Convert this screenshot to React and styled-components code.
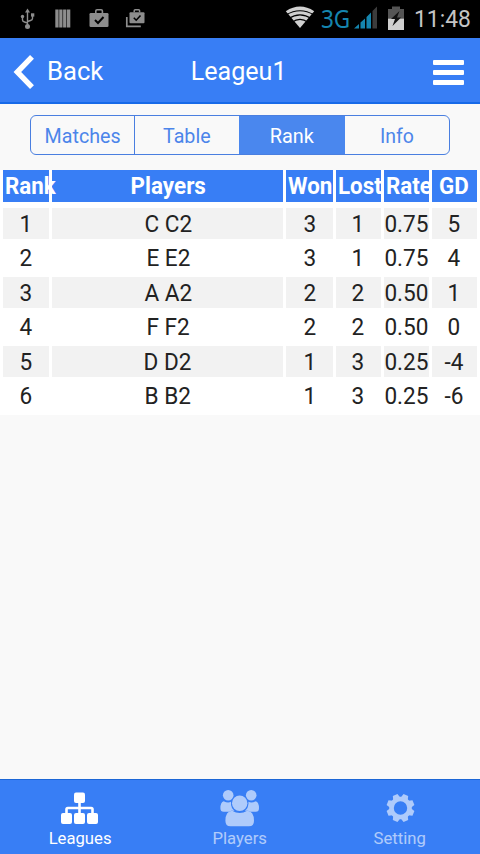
import React from "react";
import styled, { createGlobalStyle } from "styled-components";

const Global = createGlobalStyle`
  * { box-sizing: border-box; }
  body { margin: 0; background: #f9f9f9; font-family: Roboto, "Noto Sans", sans-serif; }
`;

const Screen = styled.div`
  width: 480px;
  height: 854px;
  display: flex;
  flex-direction: column;
  background: #f9f9f9;
  overflow: hidden;
`;

const Label = styled.span`
  display: inline-block;
  white-space: nowrap;
  flex: none;
  transform: scaleX(${(p) => p.$sx || 1});
  transform-origin: ${(p) => p.$origin || "center"};
`;

const StatusBar = styled.div`
  height: 38px;
  flex: none;
  background: #000;
  display: flex;
  justify-content: space-between;
`;

const Network = styled.span`
  font-family: "Noto Sans", sans-serif;
  font-size: 25px;
  line-height: 36px;
  color: #1585ae;
  margin-left: 6px;
  width: 33px;
`;

const Clock = styled.span`
  font-size: 24px;
  line-height: 39px;
  color: #c4c4c4;
  margin-left: 10px;
  width: 57px;
`;

const StatusRight = styled.div`
  display: flex;
  width: 195px;
`;

const Header = styled.header`
  height: 66px;
  flex: none;
  background: #387ef5;
  border-bottom: 2px solid #176ae8;
  color: #fff;
  font-size: 26px;
  line-height: 66px;
  display: grid;
  grid-template-columns: 160px 1fr 160px;
`;

const BackButton = styled.div`
  display: flex;
  padding-left: 13px;
  gap: 12px;
`;

const Title = styled.div`
  display: flex;
  justify-content: center;
  padding-right: 3px;
`;

const MenuButton = styled.div`
  display: flex;
  flex-direction: column;
  gap: 5px;
  align-items: flex-end;
  padding: 22px 16px 0 0;
`;

const MenuLine = styled.i`
  width: 31px;
  height: 5px;
  border-radius: 1px;
  background: #fff;
`;

const Tabs = styled.div`
  height: 40px;
  flex: none;
  margin: 11px 30px 15px;
  border: 1px solid #4a7fe0;
  border-radius: 6px;
  display: grid;
  grid-template-columns: 104px 104.4px 105.4px 1fr;
  overflow: hidden;
`;

const Tab = styled.div`
  display: flex;
  justify-content: center;
  font-size: 20.5px;
  line-height: 40px;
  color: ${(p) => (p.$active ? "#fff" : "#4c85ea")};
  background: ${(p) => (p.$active ? "#4a87ee" : "transparent")};
  border-right: ${(p) => (p.$divider ? "1px solid #4a7fe0" : "0")};
`;

const Table = styled.div`
  flex: none;
  background: #fff;
  padding: 0 3px;
  height: 244.5px;
`;

const Row = styled.div`
  display: grid;
  grid-template-columns: 46.4px 231px 46.3px 45px 45px 45px;
  grid-template-rows: 31.5px;
  column-gap: 3px;
  height: 31.5px;
  margin-bottom: ${(p) => (p.$head ? "6px" : "3px")};
`;

const Cell = styled.div`
  display: flex;
  justify-content: center;
  background: ${(p) => (p.$shade ? "#f2f2f2" : "transparent")};
  color: #222;
  font-size: 24px;
  line-height: 33px;
  min-width: 0;
`;

const HeadCell = styled(Cell)`
  background: #387ef5;
  color: #fff;
  font-weight: 700;
  line-height: 32px;
  justify-content: ${(p) => (p.$start ? "flex-start" : "center")};
  padding-left: ${(p) => (p.$start ? "2px" : "0")};
`;

const Spacer = styled.div`
  flex: 1;
`;

const BottomBar = styled.nav`
  height: 75px;
  flex: none;
  background: #387ef5;
  border-top: 1.5px solid #1b66d6;
  display: grid;
  grid-template-columns: repeat(3, 160px);
`;

const NavItem = styled.div`
  color: #fff;
  opacity: ${(p) => (p.$active ? 1 : 0.6)};
  display: flex;
  flex-direction: column;
  align-items: center;
  padding-top: 8px;
  font-size: 17px;
  line-height: 21px;
`;

const StatusIcons = () => (
  <svg width="160" height="38" viewBox="0 0 160 38" fill="#8d8d8d">
    <g stroke="#8d8d8d" strokeWidth="1.4" fill="none">
      <path d="M27.5 12v14M22.5 17v3q0 1.5 2 2l3 1M32.5 16v2.5q0 1.500-2 2l-3 1" />
    </g>
    <path d="M27.500 8.500l2.500 4h-5z" />
    <circle cx="27.500" cy="26.500" r="2.500" />
    <circle cx="22.500" cy="16.500" r="1.700" />
    <path d="M31 13.300h3.300v3.300H31z" />
    <path d="M55.300 9.500h3.300v18h-3.300zM59.200 9.500h3.300v18h-3.300zM63.100 9.500h3.300v18h-3.300zM67 9.500h3.300v18H67z" />
    <rect x="89.500" y="13" width="19" height="14" rx="1.300" />
    <path d="M95.800 13v-2q0-1.300 1.300-1.300h4q1.300 0 1.300 1.300v2" fill="none" stroke="#8d8d8d" strokeWidth="1.600" />
    <path d="M95 20l3 3 5.500-6" fill="none" stroke="#000" strokeWidth="2" />
    <rect x="129.500" y="12.300" width="15" height="11" rx="1" />
    <path d="M134.200 12.300v-1.500q0-1 1-1h3.400q1 0 1 1v1.500" fill="none" stroke="#8d8d8d" strokeWidth="1.500" />
    <path d="M133.800 17.800l2.400 2.400 4.300-4.700" fill="none" stroke="#000" strokeWidth="1.600" />
    <path d="M126.800 17v9.300h14" fill="none" stroke="#8d8d8d" strokeWidth="1.700" />
  </svg>
);

const WifiIcon = () => (
  <svg width="30" height="38" viewBox="285 0 30 38">
    <path d="M300 28L285.800 11.200Q300 2 314.200 11.200z" fill="#d0d0d0" />
    <g fill="none" stroke="#000" strokeWidth="1.200">
      <path d="M286 15q14-8.500 28 0" />
      <path d="M288.500 18.600q11.500-7.500 23 0" />
      <path d="M292 22.200q8-5.500 16 0" />
    </g>
  </svg>
);

const SignalIcon = () => (
  <svg width="24" height="38" viewBox="0 0 24 38" fill="#1585ae">
    <path d="M0 28.500l5-4.500v4.500zM6.500 22.500l4.500-4v10H6.500zM12.500 17l4.500-4.500v16h-4.500z" />
    <path d="M18.500 11L23 6.500v22h-4.500z" fill="#3c3c3c" />
  </svg>
);

const BatteryIcon = () => (
  <svg width="16" height="38" viewBox="0 0 16 38">
    <path d="M4 6.500h8V9h4v9.500H0V9h4z" fill="#555" />
    <path d="M0 18.500h16V30H0z" fill="#cfcfcf" />
    <path d="M11.500 11L3 19h4l-2.500 7L13 17.500H9z" fill="#111" />
  </svg>
);

const BackIcon = () => (
  <svg width="22" height="66" viewBox="0 0 22 66">
    <path d="M19 18.800L4.300 34 19 49.200" fill="none" stroke="#fff" strokeWidth="5.400" />
  </svg>
);

const LeaguesIcon = () => (
  <svg width="40" height="40" viewBox="0.500 0.500 40 40" fill="#fff">
    <rect x="14.500" y="5" width="11" height="10.500" rx="2" />
    <rect x="1.500" y="25.500" width="11" height="11" rx="2" />
    <rect x="14.500" y="25.500" width="11" height="11" rx="2" />
    <rect x="27.500" y="25.500" width="11" height="11" rx="2" />
    <path d="M20 14v13M7 27v-5.200q0-1.300 1.300-1.300h23.400q1.300 0 1.300 1.300V27" fill="none" stroke="#fff" strokeWidth="2.600" />
  </svg>
);

const PlayersIcon = () => (
  <svg width="40" height="40" viewBox="0.300 0.300 40 40" fill="#fff">
    <circle cx="8.500" cy="7.500" r="5.300" />
    <circle cx="31.500" cy="7.500" r="5.300" />
    <path d="M4 13.500q4.300 2.300 7.300.5-.500 6.200 3.500 9h-3q-1.800.5-2.500 1H4q-3.300 0-3.300-3.500 0-6 3.300-7zM36 13.500q-4.300 2.300-7.300.5.500 6.200-3.500 9h3q1.800.5 2.500 1H36q3.300 0 3.300-3.500 0-6-3.300-7z" />
    <circle cx="20" cy="15.500" r="8.400" fill="#387ef5" />
    <circle cx="20" cy="15.500" r="7.700" />
    <path d="M12.500 23q7.500 4.500 15 0 6.800.5 6.800 10 0 5.500-5 5.500H10.700q-5 0-5-5.500 0-9.500 6.800-10z" />
  </svg>
);

const SettingIcon = () => (
  <svg width="40" height="40" viewBox="-20.500 -20 40 40">
    <g fill="#fff">
      <circle r="9" fill="none" stroke="#fff" strokeWidth="4.600" />
      {[22.5, 67.5, 112.5, 157.5, 202.5, 247.5, 292.5, 337.5].map((a) => (
        <path key={a} transform={`rotate(${a})`} d="M-3.700-10L-2.500-14h5L3.700-10z" />
      ))}
    </g>
  </svg>
);

const columns = [
  { name: "Rank", sx: 0.93, start: true },
  { name: "Players", sx: 0.935 },
  { name: "Won", sx: 0.93, start: true },
  { name: "Lost", sx: 0.93, start: true },
  { name: "Rate", sx: 0.93, start: true },
  { name: "GD", sx: 0.93 },
];

const rows = [
  ["1", "C C2", "3", "1", "0.75", "5"],
  ["2", "E E2", "3", "1", "0.75", "4"],
  ["3", "A A2", "2", "2", "0.50", "1"],
  ["4", "F F2", "2", "2", "0.50", "0"],
  ["5", "D D2", "1", "3", "0.25", "-4"],
  ["6", "B B2", "1", "3", "0.25", "-6"],
];

export default function App() {
  return (
    <Screen>
      <Global />
      <StatusBar>
        <StatusIcons />
        <StatusRight>
          <WifiIcon />
          <Network><Label $sx={0.9} $origin="left">3G</Label></Network>
          <SignalIcon />
          <Spacer />
          <BatteryIcon />
          <Clock><Label $sx={0.95} $origin="left">11:48</Label></Clock>
          <Spacer />
        </StatusRight>
      </StatusBar>
      <Header>
        <BackButton>
          <BackIcon />
          <Label $sx={0.985} $origin="left">Back</Label>
        </BackButton>
        <Title><Label $sx={0.965}>Leageu1</Label></Title>
        <MenuButton><MenuLine /><MenuLine /><MenuLine /></MenuButton>
      </Header>
      <Tabs>
        <Tab $divider><Label $sx={0.96}>Matches</Label></Tab>
        <Tab><Label $sx={0.96}>Table</Label></Tab>
        <Tab $active><Label $sx={0.97}>Rank</Label></Tab>
        <Tab><Label $sx={0.95}>Info</Label></Tab>
      </Tabs>
      <Table>
        <Row $head>
          {columns.map((c) => (
            <HeadCell key={c.name} $start={c.start}>
              <Label $sx={c.sx} $origin={c.start ? "left" : "center"}>{c.name}</Label>
            </HeadCell>
          ))}
        </Row>
        {rows.map((r, i) => (
          <Row key={r[0]}>
            {r.map((v, j) => (
              <Cell key={j} $shade={i % 2 === 0}><Label $sx={0.94}>{v}</Label></Cell>
            ))}
          </Row>
        ))}
      </Table>
      <Spacer />
      <BottomBar>
        <NavItem $active><LeaguesIcon /><Label $sx={0.98}>Leagues</Label></NavItem>
        <NavItem><PlayersIcon /><Label $sx={0.98}>Players</Label></NavItem>
        <NavItem><SettingIcon /><Label $sx={0.98}>Setting</Label></NavItem>
      </BottomBar>
    </Screen>
  );
}
